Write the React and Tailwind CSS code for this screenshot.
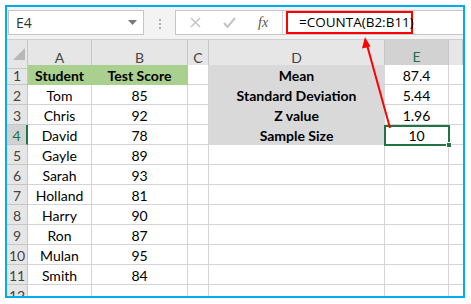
import React from "react";

const rows = [
  ["Student", "Test Score", "", "Mean", "87.4"],
  ["Tom", "85", "", "Standard Deviation", "5.44"],
  ["Chris", "92", "", "Z value", "1.96"],
  ["David", "78", "", "Sample Size", "10"],
  ["Gayle", "89", "", "", ""],
  ["Sarah", "93", "", "", ""],
  ["Holland", "81", "", "", ""],
  ["Harry", "90", "", "", ""],
  ["Ron", "87", "", "", ""],
  ["Mulan", "95", "", "", ""],
  ["Smith", "84", "", "", ""],
  ["", "", "", "", ""],
];

const gridCols = "grid grid-cols-[21px_64px_96px_21px_176px_64px_1fr]";

function Cell({ r, c, v }) {
  const green = r === 0 && (c === 0 || c === 1);
  const grey = r <= 3 && c === 3;
  let cls = "h-[20px] flex items-center justify-center pt-[2px] border-r border-b text-[14px] text-black leading-none";
  if (green) cls += " bg-[#a9d08e] border-[#a9d08e] font-bold";
  else if (grey) cls += " bg-[#d9d9d9] border-[#d9d9d9] font-bold";
  else cls += " bg-white border-[#d4d4d4]";
  return <div className={cls}>{v}</div>;
}

export default function App() {
  return (
    <div className="w-[471px] h-[304px] bg-white p-[5px]" style={{ fontFamily: "Lato, 'Open Sans', sans-serif" }}>
      <div className="w-[460px] h-[293px] border-2 border-[#00aeef] overflow-hidden relative bg-white">
        {/* top bar */}
        <div className="h-[33px] bg-[#f3f3f3] border-b border-[#d0d0d0] flex items-start pt-[3px] pl-[1px]">
          <div className="w-[136px] h-[25px] bg-white border border-[#c6c6c6] flex items-center justify-between pl-[7px] pr-[6px]">
            <span className="text-[14px] text-[#333]" style={{ fontFamily: "'Open Sans', sans-serif" }}>E4</span>
            <svg width="9" height="5" viewBox="0 0 9 5"><path d="M0 0 L9 0 L4.5 5 Z" fill="#777" /></svg>
          </div>
          <div className="w-[31px] h-[25px] flex flex-col items-center justify-center gap-[2px] pt-[2px]">
            <span className="w-[2px] h-[2px] bg-[#b0b0b0]" />
            <span className="w-[2px] h-[2px] bg-[#b0b0b0]" />
            <span className="w-[2px] h-[2px] bg-[#b0b0b0]" />
          </div>
          <div className="flex-1 h-[25px] bg-white border border-[#c6c6c6] border-r-0 flex">
            <div className="w-[107px] h-full border-r border-[#d4d4d4] flex items-center">
              <svg className="ml-[14px]" width="11" height="11" viewBox="0 0 11 11"><path d="M1 1 L10 10 M10 1 L1 10" stroke="#c4c4c4" strokeWidth="1.5" /></svg>
              <svg className="ml-[22px]" width="13" height="11" viewBox="0 0 13 11"><path d="M1 6 L4.5 10 L12 1" stroke="#c4c4c4" strokeWidth="2" fill="none" /></svg>
              <span className="ml-[22px] text-[14px] italic text-[#555]" style={{ fontFamily: "'Liberation Serif', serif" }}>fx</span>
            </div>
            <div className="pl-[3px]">
              <div className="w-[127px] h-[23px] border-2 border-[#ff0000] flex items-center pl-[11px] text-[13.5px] text-black" style={{ fontFamily: "'Open Sans', sans-serif" }}>
                =COUNTA(B2:B11)
              </div>
            </div>
          </div>
        </div>
        {/* column headers */}
        <div className={gridCols + " h-[25px] bg-[#e6e6e6]"}>
          <div className="border-r border-b border-[#c6c6c6] relative">
            <svg className="absolute left-[6px] top-[8px]" width="12" height="12" viewBox="0 0 12 12"><path d="M12 0 L12 12 L0 12 Z" fill="#b8b8b8" /></svg>
          </div>
          {["A", "B", "C", "D", "E", ""].map((l, i) => (
            <div
              key={i}
              className={
                l === "E"
                  ? "border-r border-[#c6c6c6] border-b-2 border-b-[#217346] bg-[#d2d2d2] flex items-center justify-center pt-[6px] text-[14px] text-[#217346]"
                  : "border-r border-b border-[#c6c6c6] flex items-center justify-center pt-[6px] text-[14px] text-[#444]"
              }
            >
              {l}
            </div>
          ))}
        </div>
        {/* rows */}
        {rows.map((row, r) => (
          <div key={r} className={gridCols}>
            <div
              className={
                r === 3
                  ? "h-[20px] bg-[#d2d2d2] border-r-2 border-r-[#217346] border-b border-b-[#c6c6c6] flex items-center justify-center pt-[2px] leading-none text-[14px] text-[#217346]"
                  : "h-[20px] bg-[#e6e6e6] border-r border-b border-[#c6c6c6] flex items-center justify-center pt-[2px] leading-none text-[14px] text-[#444]"
              }
            >
              {r + 1}
            </div>
            {row.map((v, c) => (
              <Cell key={c} r={r} c={c} v={v} />
            ))}
            <div className="h-[20px] border-b border-[#d4d4d4] bg-white" />
          </div>
        ))}
        {/* selection */}
        <div className="absolute left-[377px] top-[118px] w-[66px] h-[21px] border-2 border-[#217346]" />
        <div className="absolute left-[439px] top-[135px] w-[6px] h-[6px] bg-[#217346] border border-white" />
        {/* arrow */}
        <svg className="absolute left-0 top-0" width="456" height="289" viewBox="0 0 456 289">
          <line x1="383" y1="121" x2="360" y2="38" stroke="#ff0000" strokeWidth="2" />
          <path d="M358 30 L363.5 39.5 L355 41.5 Z" fill="#ff0000" />
        </svg>
      </div>
    </div>
  );
}
